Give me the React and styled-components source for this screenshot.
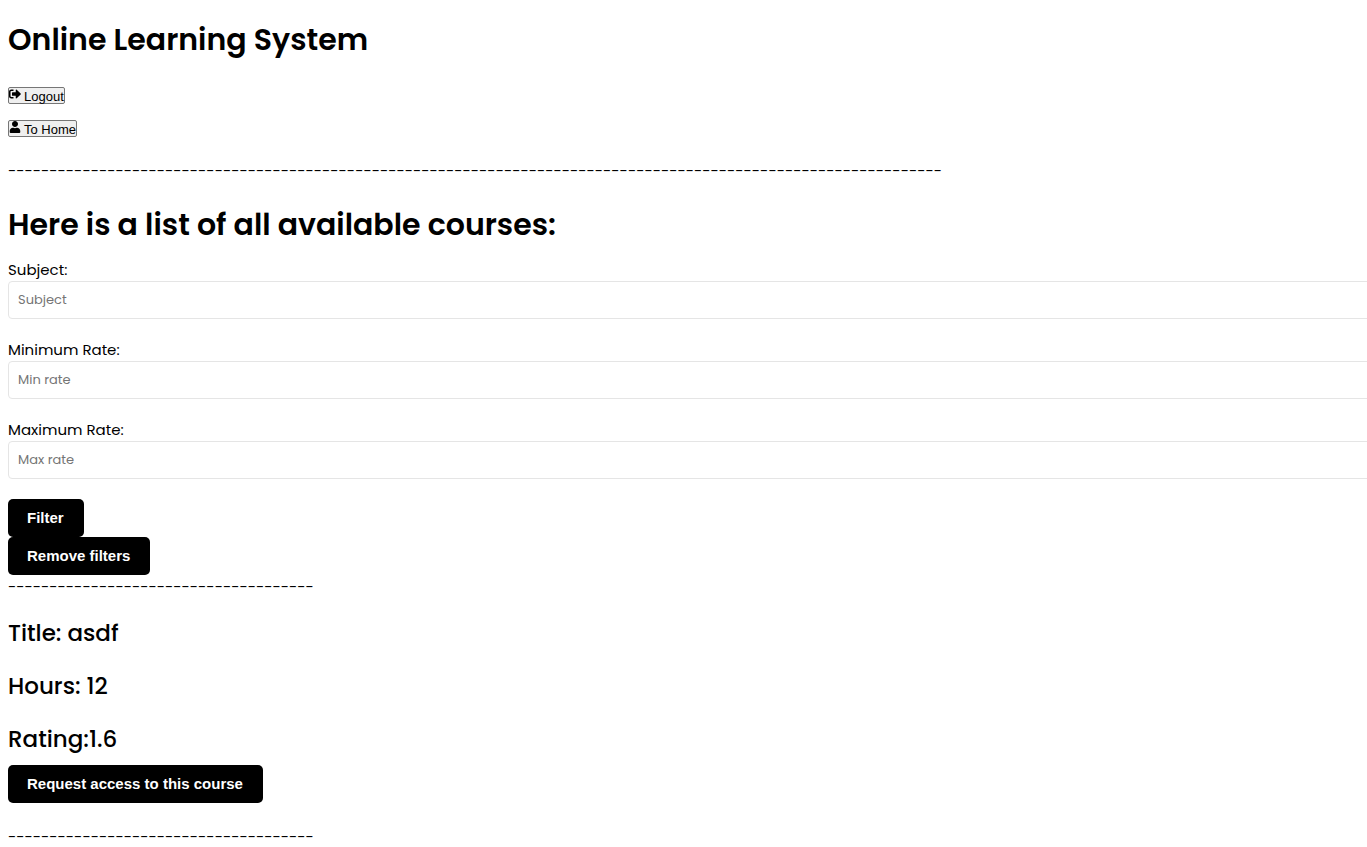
import React from "react";
import styled, { createGlobalStyle } from "styled-components";
import { FaSignOutAlt, FaUser } from "react-icons/fa";

const GlobalStyle = createGlobalStyle`
  body {
    margin: 0;
    overflow-x: hidden;
    background: #fff;
    color: #000;
    font-family: Poppins, Inter, sans-serif;
    font-size: 15px;
    font-weight: 400;
    line-height: 24px;
  }
`;

const Page = styled.main`
  padding: 16px 8px 0;
`;

const Heading = styled.h1`
  margin: 0;
  font-size: 30px;
  font-weight: 600;
  line-height: 48px;
`;

const Nav = styled.nav`
  display: flex;
  flex-direction: column;
  align-items: flex-start;
  gap: 16px;
  margin: 23px 0 22px;
`;

const NavButton = styled.button`
  display: flex;
  gap: 3px;
  height: 17px;
  padding: 0;
  border: 1px solid #767676;
  border-radius: 2px;
  background: #efefef;
  color: #000;
  font: 13px/17px "Liberation Sans", Arial, sans-serif;

  svg {
    width: 12px;
    height: 12px;
  }
`;

const Divider = styled.div`
  overflow: hidden;
  line-height: 24px;
  white-space: nowrap;
`;

const Filters = styled.form`
  display: flex;
  flex-direction: column;
  align-items: flex-start;
`;

const Field = styled.div`
  width: 100%;
  margin-bottom: 20px;
`;

const Label = styled.label`
  display: block;
  line-height: 22px;
`;

const Input = styled.input`
  display: block;
  box-sizing: content-box;
  width: 100%;
  height: 36px;
  padding: 0 9px;
  border: 1px solid #e5e5e5;
  border-radius: 4px;
  font: 400 13px/20px Poppins, Inter, sans-serif;

  &::placeholder {
    color: #757575;
    opacity: 1;
  }
`;

const ActionButton = styled.button`
  height: 38px;
  padding: 0 20px 0 19px;
  border: 0;
  border-radius: 5px;
  background: #000;
  color: #fff;
  font: bold 15px/20px "Liberation Sans", Arial, sans-serif;
`;

const CoursesHeading = styled(Heading)`
  margin: 18px 0 10px;
`;

const Course = styled.article`
  padding: 18px 0 22px;
`;

const Detail = styled.h2`
  margin: 0 0 20px;
  font-size: 23px;
  font-weight: 500;
  line-height: 33px;

  &:last-of-type {
    margin-bottom: 9px;
  }
`;

const fields = [
  { id: "subject", label: "Subject:", placeholder: "Subject" },
  { id: "min-rate", label: "Minimum Rate:", placeholder: "Min rate" },
  { id: "max-rate", label: "Maximum Rate:", placeholder: "Max rate" },
];

export default function App() {
  return (
    <>
      <GlobalStyle />
      <Page>
        <Heading>Online Learning System</Heading>
        <Nav>
          <NavButton type="button">
            <FaSignOutAlt aria-hidden="true" />
            Logout
          </NavButton>
          <NavButton type="button">
            <FaUser aria-hidden="true" />
            To Home
          </NavButton>
        </Nav>
        <Divider>{"-".repeat(113)}</Divider>
        <CoursesHeading>Here is a list of all available courses:</CoursesHeading>
        <Filters onSubmit={(event) => event.preventDefault()}>
          {fields.map((field) => (
            <Field key={field.id}>
              <Label htmlFor={field.id}>{field.label}</Label>
              <Input id={field.id} placeholder={field.placeholder} />
            </Field>
          ))}
          <ActionButton type="submit">Filter</ActionButton>
          <ActionButton type="reset">Remove filters</ActionButton>
        </Filters>
        <Divider>{"-".repeat(37)}</Divider>
        <Course>
          <Detail>Title: asdf</Detail>
          <Detail>Hours: 12</Detail>
          <Detail>Rating:1.6</Detail>
          <ActionButton type="button">Request access to this course</ActionButton>
        </Course>
        <Divider>{"-".repeat(37)}</Divider>
      </Page>
    </>
  );
}
